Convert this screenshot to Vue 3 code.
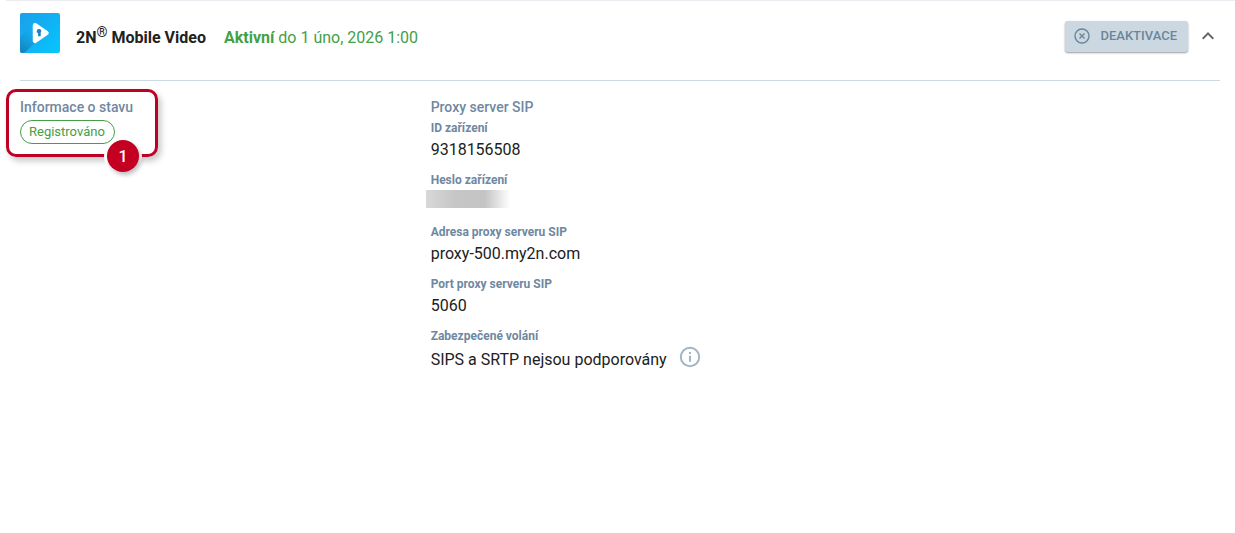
<script setup>
import { ref } from 'vue'

const open = ref(true)
</script>

<template>
  <section class="service">
    <header class="head">
      <svg class="logo" viewBox="0 0 40 40" aria-hidden="true">
        <defs>
          <linearGradient id="tile" x1="0" y1="0" x2="1" y2="1">
            <stop offset="0" stop-color="#1c9fea" />
            <stop offset="0.6" stop-color="#0db6f6" />
            <stop offset="1" stop-color="#05c8fc" />
          </linearGradient>
          <linearGradient id="shade" gradientUnits="userSpaceOnUse" x1="15" y1="18" x2="3" y2="36">
            <stop offset="0" stop-color="#1497df" stop-opacity="0" />
            <stop offset="1" stop-color="#1688c0" />
          </linearGradient>
          <clipPath id="tileClip"><rect width="40" height="40" rx="2" /></clipPath>
        </defs>
        <g clip-path="url(#tileClip)">
          <rect width="40" height="40" fill="url(#tile)" />
          <path d="M0 24 L13 11 L15 30 L4 40 L0 40Z" fill="url(#shade)" />
          <path d="M15 12.200 L26.500 20 L15 27.800Z" fill="#fff" stroke="#fff" stroke-width="4.500" stroke-linejoin="round" />
          <path d="M19.200 16a2.100 2.100 0 0 1 2.100 2.100c0 .7-.3 1.100-.6 1.500v3.700h-2.600v-3.600h-1.300v-1.600a2.200 2.100 0 0 1 2.400-2.100Z" fill="#1285c4" />
        </g>
      </svg>
      <h2 class="name">2N<sup>®</sup> Mobile Video</h2>
      <p class="validity"><strong>Aktivní</strong> do 1 úno, 2026 1:00</p>
      <button type="button" class="deactivate">
        <svg viewBox="0 0 16 16" width="16" height="16" aria-hidden="true">
          <circle cx="8" cy="8" r="7" />
          <path d="M5.500 5.500l5 5M10.500 5.500l-5 5" />
        </svg>
        Deaktivace
      </button>
      <button type="button" class="toggle" :aria-expanded="open" aria-label="Sbalit" @click="open = !open">
        <svg viewBox="0 0 24 24" width="24" height="24" aria-hidden="true">
          <path d="M12 8l-6 6 1.410 1.410L12 10.830l4.590 4.580L18 14z" />
        </svg>
      </button>
    </header>

    <div v-if="open" class="body">
      <div class="status">
        <h3>Informace o stavu</h3>
        <span class="chip">Registrováno</span>
        <div class="callout"><span class="marker">1</span></div>
      </div>
      <div class="proxy">
        <h3>Proxy server SIP</h3>
        <dl>
          <dt>ID zařízení</dt>
          <dd>9318156508</dd>
          <dt>Heslo zařízení</dt>
          <dd><span class="hidden-value"></span></dd>
          <dt>Adresa proxy serveru SIP</dt>
          <dd>proxy-500.my2n.com</dd>
          <dt>Port proxy serveru SIP</dt>
          <dd>5060</dd>
          <dt>Zabezpečené volání</dt>
          <dd class="with-info">
            <span>SIPS a SRTP nejsou podporovány</span>
            <svg viewBox="0 0 22 22" width="22" height="22" aria-hidden="true">
              <circle cx="11" cy="11" r="9.200" />
              <path d="M11 9.800v6M11 6v2" />
            </svg>
          </dd>
        </dl>
      </div>
    </div>
  </section>
</template>

<style>
body {
  background: #fff;
}
</style>

<style scoped>
.service {
  margin-left: 6px;
  padding: 0 15px 0 14px;
  border-top: 1px solid #ebedf2;
  font-family: Roboto, "Liberation Sans", sans-serif;
  font-size: 16px;
  line-height: 24px;
  color: #212121;
}
h2, h3, p, dl, dd {
  margin: 0;
}
.head {
  display: flex;
  align-items: flex-start;
  padding: 12px 0 27px;
  border-bottom: 1px solid #cbd9e4;
}
.logo {
  width: 40px;
  height: 40px;
  margin-right: 16px;
}
.name {
  margin: 13px 18px 0 0;
  font-size: 16px;
  font-weight: 700;
}
.name sup {
  font-size: 14px;
  font-weight: 400;
  line-height: 0;
}
.validity {
  margin-top: 13px;
  color: #43a047;
}
.validity strong {
  font-weight: 700;
}
.deactivate {
  display: flex;
  align-items: center;
  gap: 10px;
  height: 31px;
  margin: 8px 8px 0 auto;
  padding: 0 11px 1px 9px;
  border: 0;
  border-radius: 3px;
  background: #cbd8e1;
  box-shadow: 0 1px 2px rgba(0, 0, 0, 0.4);
  color: #6b859c;
  font: 500 13px/24px Roboto, sans-serif;
  text-transform: uppercase;
}
.deactivate svg {
  fill: none;
  stroke: currentColor;
  stroke-width: 1.4;
}
.toggle {
  display: flex;
  margin-top: 11px;
  padding: 0;
  border: 0;
  background: none;
}
.toggle path {
  fill: #666;
}
.body {
  display: grid;
  grid-template-columns: 1fr 2fr;
  gap: 16px;
  padding-top: 16px;
}
h3 {
  font-size: 14px;
  font-weight: 500;
  line-height: 20px;
  color: #6f88a1;
}
.status {
  position: relative;
}
.chip {
  display: inline-block;
  margin-top: 3px;
  padding: 0 9px 0 8px;
  border: 1px solid #43a047;
  border-radius: 12px;
  font-size: 13px;
  line-height: 22px;
  color: #43a047;
}
.callout {
  position: absolute;
  top: -8px;
  left: -14px;
  box-sizing: border-box;
  width: 152px;
  height: 68px;
  border: 3px solid #bd0024;
  border-radius: 10px;
  box-shadow: 3px 4px 6px rgba(0, 0, 0, 0.22);
}
.marker {
  position: absolute;
  right: 16px;
  bottom: -18px;
  width: 32px;
  height: 32px;
  border-radius: 50%;
  background: #c40022;
  box-shadow: 2px 3px 4px rgba(0, 0, 0, 0.25), 0 0 0 3px #fff;
  color: #fff;
  font-weight: 500;
  line-height: 34px;
  text-align: center;
}
dl {
  padding-top: 1px;
}
dt {
  font-size: 12px;
  font-weight: 700;
  line-height: 20px;
  color: #6f88a1;
}
dd {
  min-height: 24px;
  margin-bottom: 8px;
}
.hidden-value {
  display: block;
  width: 84px;
  height: 18px;
  margin-left: -5px;
  background: linear-gradient(90deg, #d8d8d9, #c6c6c7 35%, #c4c4c5 70%, #fff);
}
.with-info {
  display: flex;
  align-items: flex-start;
  gap: 12px;
}
.with-info span {
  padding-top: 2px;
}
.with-info svg {
  fill: none;
  stroke: #a3b5c6;
  stroke-width: 2;
}
</style>
